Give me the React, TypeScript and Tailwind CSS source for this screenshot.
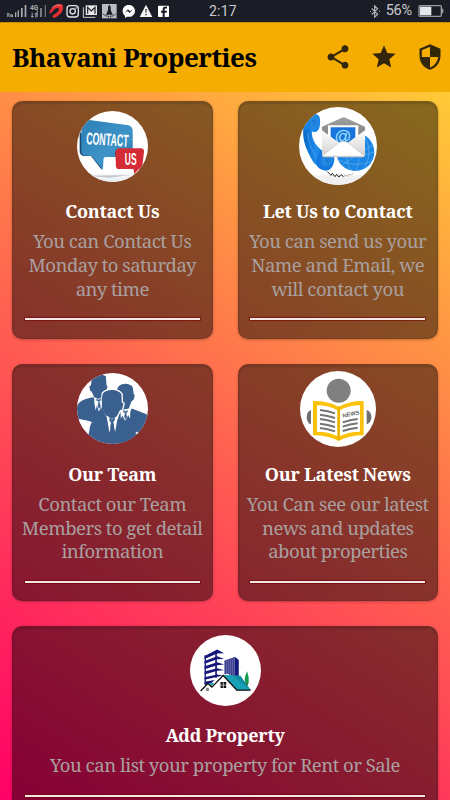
import type { ReactNode } from "react";
import { MdSecurity, MdShare, MdStar } from "react-icons/md";

const serif = "font-['Noto_Serif','Droid_Serif','DejaVu_Serif_Condensed','DejaVu_Serif',serif] font-stretch-condensed";

function StatusBar() {
    return (
        <div className="flex h-[22px] items-center bg-[#1a1c26] pl-[6px] pr-[6px] font-[Roboto,sans-serif] font-stretch-normal text-[#c9cacd]">
            <svg className="h-[22px] w-[164px] shrink-0" viewBox="18 0 492 66">
                <g fill="#a9abb0">
                    <rect x="36" y="44" width="3" height="7" />
                    <rect x="45" y="37" width="4" height="14" />
                    <rect x="53" y="31" width="4" height="20" />
                    <rect x="63" y="24" width="5" height="27" />
                    <rect x="74" y="15" width="5" height="36" />
                    <rect x="110" y="31" width="3" height="20" />
                    <rect x="121" y="24" width="4" height="27" />
                    <rect x="134" y="15" width="4" height="36" opacity=".6" />
                    <text x="20" y="51" fontSize="14" fontWeight="700">Rx</text>
                    <text x="90" y="31" fontSize="20" fontWeight="700">4G</text>
                    <path d="M95 38h3v10h4l-5 5-5-5h3zM106 53h3V43h4l-5-5-5 5h3z" />
                </g>
                {/* carrier swoosh */}
                <path d="M148 38C154 16 180 6 188 16c6 12-6 31-24 37-7 2-9-4-4-8 10-6 19-14 16-19-4-5-15 2-20 10-2 4-9 6-8 2z" fill="#e02f2f" />
                <path d="M157 23c8-8 22-11 27-5" fill="none" stroke="#f28078" strokeWidth="3" />
                <g fill="none" stroke="#e2e3e5" strokeWidth="4">
                    <rect x="201" y="17" width="34" height="34" rx="9" />
                    <circle cx="218" cy="34" r="8" />
                </g>
                <circle cx="228" cy="24" r="2.5" fill="#e2e3e5" />
                <path d="M257 16h34v29h-34z" fill="#e8e8e9" />
                <path d="M250 22v30h36" fill="none" stroke="#d0d1d4" strokeWidth="3" />
                <path d="M263 41V22l11 11 11-11v19" fill="none" stroke="#1a1c26" strokeWidth="3.500" />
                <path d="M306 12h44v43h-44z" fill="#b9bcc0" />
                <path d="M328 14l4 6v10l4 10 3 4h-22l3-4 4-10V20z" fill="#1a1c26" />
                <path d="M309 41c5 7 11 8 17 7v5m5 0v-5c6 1 12 0 16-7" fill="none" stroke="#3b3e46" strokeWidth="3" />
                <path d="M386 15c-11 0-18 8-18 18 0 6 2 10 7 14v7l7-4c14 3 23-6 23-17 0-10-8-18-19-18z" fill="#fff" />
                <path d="M374 39l10-11 6 6 9-6-10 11-6-6z" fill="#1a1c26" />
                <path d="M438 14l19 37h-38z" fill="#f4f4f4" />
                <path d="M436 27h4l-1 12h-2zM436 42h4v4h-4z" fill="#1a1c26" />
                <rect x="474" y="17" width="33" height="34" rx="2" fill="#fff" />
                <path d="M488 51V38h-5v-6h5v-4c0-6 4-9 13-8v6c-6-1-7 0-7 3v3h7l-1 6h-6v13z" fill="#1a1c26" />
            </svg>
            <span className="ml-[39px] w-[50px] text-[14px] leading-none tracking-[0.2px]">2:17</span>
            <svg className="ml-auto h-[15px] w-[12px] shrink-0" viewBox="0 0 36 42" fill="none" stroke="#b4b6ba" strokeWidth="3.500">
                <path d="M8 12l18 17-9 9V4l9 9L8 30M3 21h3m24 0h3" />
            </svg>
            <span className="ml-[5px] text-[14.5px] leading-none tracking-[-0.2px]">56%</span>
            <svg className="ml-[6px] h-[14px] w-[26px] shrink-0" viewBox="0 0 78 42">
                <rect x="3" y="5" width="67" height="32" rx="3" fill="none" stroke="#9a9ca0" strokeWidth="4" />
                <path d="M72 14h4v13h-4z" fill="#9a9ca0" />
                <path d="M6 8h34v26H6z" fill="#e5e6ea" />
            </svg>
        </div>
    );
}

function ContactArt() {
    return (
        <svg className="size-[71px] rounded-full bg-white" viewBox="231 61 214 214">
            <defs>
                <linearGradient id="bubble" x1="0" y1="0" x2="1" y2="1">
                    <stop offset="0" stopColor="#2c7fb6" />
                    <stop offset=".6" stopColor="#3e94c8" />
                    <stop offset="1" stopColor="#286f9f" />
                </linearGradient>
                <linearGradient id="floor" x1="0" y1="0" x2="0" y2="1">
                    <stop offset="0" stopColor="#ffffff" />
                    <stop offset="1" stopColor="#dfe6ed" />
                </linearGradient>
            </defs>
            <path d="M225 245h225v35H225z" fill="url(#floor)" />
            <path d="M260 256l130-2-60 8z" fill="#c3c7ca" />
            <path d="M239 122v60c0 10 8 15 18 15h16l33 42-3-30z" fill="#1c4a72" />
            <path d="M262 87l124 17c8 2 13 8 13 17v66c0 8-5 13-13 13h-68q-7 0-7 6l-2 32-34-41-20-2c-7-1-11-6-11-13v-54c0-20 5-40 18-41z" fill="url(#bubble)" />
            <g fill="#fff" fontWeight="700" fontFamily="Liberation Sans, sans-serif">
                <text x="0" y="0" fontSize="52" transform="translate(258 161) rotate(3.5) scale(.51 1)">CONTACT</text>
            </g>
            <path d="M346 184l8-10 5 60-9-5z" fill="#8e1721" />
            <path d="M359 173h64c7 0 11 4 10 11l-5 42c-1 6-5 10-11 10l-13 15-3-15h-42c-8 0-11-4-11-11v-41c0-7 4-11 11-11z" fill="#d52b36" />
            <g fill="#fff" fontWeight="700" fontFamily="Liberation Sans, sans-serif">
                <text x="0" y="0" fontSize="52" transform="translate(375 223) scale(.49 1)">US</text>
            </g>
        </svg>
    );
}

function MailArt() {
    return (
        <svg className="size-[78px] rounded-full bg-white" viewBox="221 53 234 234">
            <defs>
                <linearGradient id="flap" x1="0" y1="0" x2="0" y2="1">
                    <stop offset="0" stopColor="#a0a0a0" />
                    <stop offset="1" stopColor="#6d6d6d" />
                </linearGradient>
                <linearGradient id="phone" x1="0" y1="0" x2="1" y2="0">
                    <stop offset="0" stopColor="#0867c4" />
                    <stop offset=".5" stopColor="#1f8cec" />
                    <stop offset="1" stopColor="#0c70d2" />
                </linearGradient>
                <linearGradient id="paper" x1="0" y1="0" x2="0" y2="1">
                    <stop offset="0" stopColor="#ffffff" />
                    <stop offset="1" stopColor="#cfcfcf" />
                </linearGradient>
            </defs>
            <path d="M225 258h230v30H225z" fill="#f0f0f0" />
            <circle cx="390" cy="188" r="57" fill="#1b86e3" />
            <g fill="none" stroke="#9ad2fb" strokeWidth="1.8" opacity=".6">
                <path d="M340 212q50 24 100 4M337 188q55 20 110 0M392 245q20-55 0-110M350 228q55-40 90-60M420 145q24 50-4 94M365 190q-5 30 14 54" />
            </g>
            <path d="M235 110c-6 34 4 68 30 110l18 16 26-40c-30-16-54-42-49-76z" fill="url(#phone)" />
            <path d="M235 125c-2-28 8-49 30-52 16 0 21 10 19 32-2 16-8 25-18 23-10-1-17-12-31-3z" fill="#1683e5" />
            <ellipse cx="267" cy="101" rx="14" ry="22" fill="#2488e2" transform="rotate(12 267 101)" />
            <path d="M273 222c-1-24 8-38 25-38 17 0 30 10 29 26-1 18-10 33-24 34-12 0-30-8-30-22z" fill="#1179df" />
            <ellipse cx="305" cy="211" rx="17" ry="22" fill="#2387e3" transform="rotate(35 305 211)" />
            <path d="M247 130q4 44 28 76" fill="none" stroke="#63bcff" strokeWidth="3" opacity=".5" />
            <g fill="#0863b5">
                <circle cx="302" cy="205" r="2" /><circle cx="309" cy="205" r="2" />
                <circle cx="305" cy="212" r="2" /><circle cx="312" cy="212" r="2" />
                <circle cx="308" cy="219" r="2" /><circle cx="264" cy="94" r="2" />
                <circle cx="270" cy="98" r="2" /><circle cx="265" cy="105" r="2" />
            </g>
            <path d="M306 247l11 11 4-6 8 10 5-7 7 8 6-7 8 6" fill="none" stroke="#222" strokeWidth="3" />
            <path d="M355 263l5-7 7 5 5-7 7 3 5-6" fill="none" stroke="#999" strokeWidth="2" />
            <path d="M290 112l60-27q5-2 10 0l59 27v70H290z" fill="url(#flap)" />
            <path d="M308 108h91v70h-91z" fill="#fff" />
            <path d="M316 114h74v60h-74z" fill="#1674dc" />
            <text x="353" y="159" fontSize="50" textAnchor="middle" fill="#a5e3ff" fontFamily="Liberation Sans, sans-serif">@</text>
            <path d="M290 123l51 37q13 5 26 0l52-37v74q0 7-7 7H297q-7 0-7-7z" fill="url(#paper)" />
            <path d="M292 199l48-39q14-8 28 0l48 39" fill="#fff" stroke="#c5c5c5" strokeWidth="2" />
        </svg>
    );
}

function TeamArt() {
    return (
        <svg className="size-[71px] rounded-full bg-white" viewBox="231 24 214 214">
            <g fill="#3a6090">
                <path d="M276 34c9-7 31-7 42 0l2 28 3 2-3 13-6 2-7 17-11 6-13-5-8-17-4-2-3-14 5-2z" />
                <path d="M281 97l16 43 22-42 17 10v60l-61 5c-16-8-31-10-45-7v-38c5-20 23-26 51-31z" />
                <path d="M356 65c8-12 36-12 43 2l3 21 3 2-3 14-7 6-8 21-17 4-12-8-10-45z" />
                <path d="M357 133l19 35 20-37 45 17 6 25v72h-97z" />
            </g>
            {/* white rim round the front head */}
            <path d="M309 86c10-15 46-14 56 2l1 25 5 3-4 18-7 3-9 18-14 8-14-8-8-20-8-5-4-17 4-4z" fill="#fff" stroke="#fff" strokeWidth="8" />
            <path d="M309 86c10-15 46-14 56 2l1 25 5 3-4 18-7 3-9 18-5 4 39 16 56 30v37H240l35-68 47-16-3-4-8-16-8-5-4-17 4-4z" fill="#3a6090" />
            <path d="M227 160l46 10-7 39-39-29z" fill="#fff" />
            <path d="M284 102l-1 9 4 26 5-20-4-5zm22 0v32l-6-17 3-7zM362 134l1 28 8-17-4-7zm30 0l-1 28-8-16 3-7z" fill="#fff" />
            <path d="M320 151l9 54 6-31-7-6zm35 0l-9 50-7-28 7-7z" fill="#fff" />
            <path d="M321 152l10 8h13l10-8-5 20-8-6-4 3-5-3-8 5z" fill="#fff" />
            <path d="M329 158l8 4 8-4v10l-6-2 4 19-6 17-6-17 4-19-6 2z" fill="#3a6090" />
            <path d="M289 100l7 5 7-5v8l-4 1 3 16-5 9-4-9 2-16-6-1zM370 135l7 4 7-4v8l-4 1 2 13-5 7-4-7 2-13-5-1z" fill="#3a6090" stroke="#fff" strokeWidth="1" />
            <path d="M407 205l7-5 2 5-6 4z" fill="#fff" />
        </svg>
    );
}

function NewsArt() {
    return (
        <svg className="size-[76px] rounded-full bg-white" viewBox="223 17 228 228">
            <circle cx="339" cy="76" r="36" fill="#808080" />
            <path d="M256 134c-17 4-17 39 0 43zM423 134c19 5 19 38 0 43z" fill="#707070" />
            <path d="M262 107q44-1 77 17 33-18 75-17v103q-45 0-75 17-31-17-77-17z" fill="#fbc20a" />
            <path d="M274 120q36 0 61 15v77q-27-13-61-13zM343 135q26-15 60-15v79q-34 0-60 13z" fill="#fff" />
            <path d="M339 124v99" stroke="#e8ac00" strokeWidth="5" />
            <g fill="none" stroke="#757575" strokeWidth="6">
                <path d="M283 134q23 2 45 10M283 148q23 2 45 10M283 161q23 2 45 10M283 175q23 2 45 10M283 188q23 2 45 10" />
                <path d="M351 171q22-8 45-10M351 184q22-8 45-10M351 197q22-8 45-10" />
            </g>
            <text x="352" y="157" fontSize="17" fontWeight="700" fill="#666" transform="rotate(-12 352 157)" fontFamily="Liberation Sans, sans-serif">NEWS</text>
        </svg>
    );
}

function PropertyArt() {
    return (
        <svg className="size-[71px] rounded-full bg-white" viewBox="193 43 214 214">
            <path d="M237 106l38-19 21 11-21 1-38 16zM237 121l38-14 21 8-21 1-38 14zM237 137l38-12 21 7-21 2-38 12zM237 153l38-10 21 6-21 2-38 11zM237 170l38-8 18 3-17 4-39 9zM237 184l30-5-8 8-22 6z" fill="#14187a" />
            <path d="M237 104h4v88h-4zM269 92h5v80h-5z" fill="#14187a" />
            <path d="M297 120l32-11 11 9v54l-14-2-19-10-10 1z" fill="#14187a" />
            <path d="M302 119v44m6-46v48m6-49v52m6-54v56m6-58v58" stroke="#fff" strokeWidth="1.5" />
            <path d="M294 163l51 3 31 43-41 1z" fill="#18a0b6" />
            <path d="M320 165l24 1 31 42z" fill="#0e7185" opacity=".45" />
            <path d="M247 188h19l-7 9z" fill="#26a5b8" />
            <path d="M225 212l22-23 12 11 34-35 41 44h42" fill="none" stroke="#111" strokeWidth="4" />
            <path d="M285 185h17v18h-17z" fill="#111" />
            <path d="M293.500 185v18M285 194h17" stroke="#fff" strokeWidth="2" />
            <path d="M241 202h9v10h-9z" fill="#888" />
            <path d="M365 152q-11 23-5 38l6 5 4-7q2-19-5-36z" fill="#139c50" />
            <path d="M365 187v8" stroke="#59361b" strokeWidth="2" />
        </svg>
    );
}

type CardProps = {
    art: ReactNode;
    title: string;
    lines: string[];
    wide?: boolean;
};

function Card({ art, title, lines, wide }: CardProps) {
    return (
        <div
            className={`flex h-[237.5px] flex-col items-center rounded-[10px] border border-black/10 bg-black/47 shadow-[0_1px_3px_rgba(0,0,0,0.25),inset_0_2px_2px_rgba(0,0,0,0.15)] ${wide ? "col-span-2" : ""}`}
        >
            <div className={`flex shrink-0 items-center ${wide ? "h-[86px]" : "h-[88px]"}`}>{art}</div>
            <h2 className={`h-6 whitespace-nowrap text-[18px] font-bold leading-6 tracking-[-0.25px] text-white ${wide ? "mt-[10px]" : "mt-[9.4px]"}`}>
                {title}
            </h2>
            <div className="mt-[6px] flex flex-col items-center text-[18.5px] tracking-[-0.48px] text-[#a9a0a0]">
                {lines.map((line) => (
                    <p key={line} className="whitespace-nowrap leading-[23.7px]">
                        {line}
                    </p>
                ))}
            </div>
            <div className={`mx-auto h-[2px] shrink-0 bg-[#f3e6e6] shadow-[0_0_1px_1px_rgba(110,0,0,0.6)] ${wide ? "mt-[18px] w-[400px]" : "mt-[17.6px] w-[175px]"}`} />
        </div>
    );
}

const cards: CardProps[] = [
    {
        art: <ContactArt />,
        title: "Contact Us",
        lines: ["You can Contact Us", "Monday to saturday", "any time"],
    },
    {
        art: <MailArt />,
        title: "Let Us to Contact",
        lines: ["You can send us your", "Name and Email, we", "will contact you"],
    },
    {
        art: <TeamArt />,
        title: "Our Team",
        lines: ["Contact our Team", "Members to get detail", "information"],
    },
    {
        art: <NewsArt />,
        title: "Our Latest News",
        lines: ["You Can see our latest", "news and updates", "about properties"],
    },
    {
        art: <PropertyArt />,
        title: "Add Property",
        lines: ["You can list your property for Rent or Sale"],
        wide: true,
    },
];

export default function App() {
    return (
        <div className={`flex h-[800px] w-[450px] flex-col overflow-hidden ${serif}`}>
            <StatusBar />
            <header className="flex h-[70px] shrink-0 items-center border-t border-[#c78d06] bg-[#f5ad02] pb-[2px] pl-[12px] pr-[6px]">
                <h1 className="whitespace-nowrap text-[26px] font-bold leading-8 tracking-[-0.5px] text-black">Bhavani Properties</h1>
                <div className="ml-auto flex items-center gap-[18px] text-[#33270a]">
                    <MdShare size={28} />
                    <MdStar size={28} />
                    <MdSecurity size={28} />
                </div>
            </header>
            <main className="min-h-0 flex-1 bg-[linear-gradient(32.5deg,#ff0066_0%,#ff6251_50%,#ffca37_100%)] px-[12px] pt-[9px]">
                <div className="grid grid-cols-2 gap-[25px]">
                    {cards.map((card) => (
                        <Card key={card.title} {...card} />
                    ))}
                </div>
            </main>
        </div>
    );
}
